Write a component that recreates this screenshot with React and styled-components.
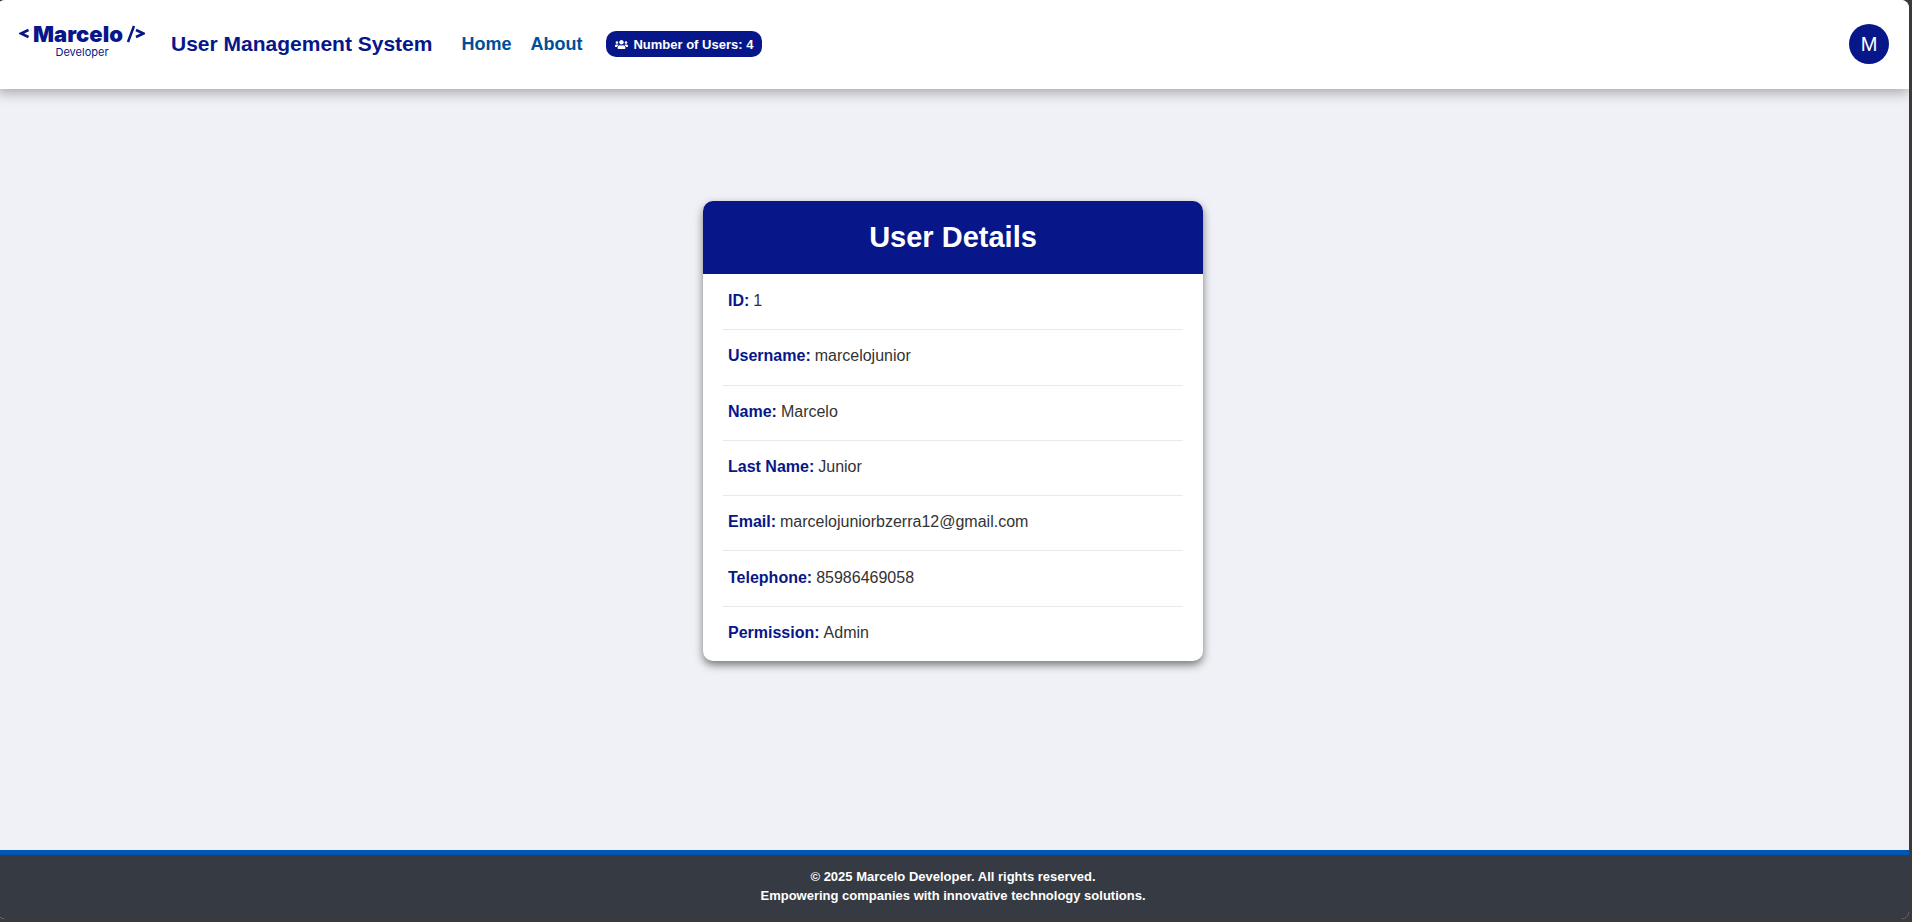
import React from "react";
import styled, { createGlobalStyle } from "styled-components";
import { FaUsers } from "react-icons/fa";

const navy = "#071789";

const GlobalStyle = createGlobalStyle`
  *, *::before, *::after { box-sizing: border-box; }
  body {
    margin: 0;
    background: #3b3a3a;
    color: #333;
    font-family: "Liberation Sans", Arial, sans-serif;
    font-size: 16px;
    overflow-x: hidden;
  }
`;

const Page = styled.div`
  display: flex;
  flex-direction: column;
  min-height: calc(100vh - 3px);
  margin: 0 3px 3px -3px;
  border-radius: 8px;
  overflow: hidden;
  background: #f0f1f6;
`;

const Header = styled.header`
  display: flex;
  align-items: center;
  justify-content: space-between;
  min-height: 89px;
  padding: 0 20px 1px;
  background: #fff;
  box-shadow: 0 4px 12px rgba(0, 0, 0, 0.3);
`;

const HeaderGroup = styled.div`
  display: flex;
  align-items: center;
`;

const Logo = styled.a`
  display: flex;
  flex-direction: column;
  align-items: center;
  width: 130px;
  padding-bottom: 8px;
  color: ${navy};
  text-decoration: none;
  font-family: Inter, sans-serif;
`;

const LogoName = styled.span`
  display: flex;
  align-items: center;
  gap: 4px;
  font-size: 22px;
  line-height: 24px;
  font-weight: 900;
`;

const LogoMark = styled.svg`
  display: block;
  fill: none;
  stroke: currentColor;
  stroke-width: 2.5;
`;

const LogoRole = styled.span`
  font-size: 11px;
  line-height: 12px;
`;

const Title = styled.h1`
  margin: 0 0 0 24px;
  color: ${navy};
  font-size: 21px;
  line-height: 24px;
`;

const Nav = styled.nav`
  display: flex;
  gap: 19px;
  margin: 0 24px 0 29px;
`;

const NavLink = styled.a`
  color: #004e98;
  font-size: 18px;
  font-weight: bold;
  line-height: 24px;
  text-decoration: none;
`;

const Badge = styled.span`
  display: flex;
  align-items: center;
  gap: 5px;
  height: 26px;
  padding: 0 9px;
  border-radius: 10px;
  background: ${navy};
  color: #fff;
  font-size: 13px;
  font-weight: bold;
`;

const Avatar = styled.button`
  width: 40px;
  height: 40px;
  padding: 0;
  border: 0;
  border-radius: 50%;
  background: ${navy};
  color: #fff;
  font-family: inherit;
  font-size: 20px;
  cursor: pointer;
`;

const Main = styled.main`
  flex: 1;
  display: flex;
  justify-content: center;
  align-items: flex-start;
  padding: 112px 20px;
`;

const Card = styled.section`
  width: 100%;
  max-width: 500px;
  border-radius: 10px;
  overflow: hidden;
  background: #fff;
  box-shadow: 0 4px 8px rgba(0, 0, 0, 0.5);
`;

const CardTitle = styled.h2`
  margin: 0;
  padding: 18px 20px;
  background: ${navy};
  color: #fff;
  font-size: 29px;
  line-height: 37px;
  text-align: center;
`;

const Details = styled.dl`
  display: grid;
  grid-auto-rows: 1fr;
  min-height: 387px;
  margin: 0;
  padding: 0 20px;
`;

const Detail = styled.div`
  display: flex;
  align-items: center;
  gap: 4px;
  padding: 0 5px 2px;

  & + & {
    border-top: 1px solid #e8e9ea;
  }
`;

const Label = styled.dt`
  color: ${navy};
  font-weight: bold;
`;

const Value = styled.dd`
  margin: 0;
`;

const Footer = styled.footer`
  padding: 12px 20px 14px;
  border-top: 5px solid #0056b3;
  background: #363a42;
  color: #fff;
  font-size: 13px;
  font-weight: bold;
  line-height: 19px;
  text-align: center;
`;

const FooterLine = styled.p`
  margin: 0;
`;

const user = [
  ["ID", "1"],
  ["Username", "marcelojunior"],
  ["Name", "Marcelo"],
  ["Last Name", "Junior"],
  ["Email", "marcelojuniorbzerra12@gmail.com"],
  ["Telephone", "85986469058"],
  ["Permission", "Admin"],
];

export default function App() {
  return (
    <>
      <GlobalStyle />
      <Page>
        <Header>
          <HeaderGroup>
            <Logo href="#home">
              <LogoName>
                <LogoMark width="10" height="16" viewBox="0 0 10 16" aria-hidden="true">
                  <path d="M9.500 4L2 7.500L9.500 11" />
                </LogoMark>
                Marcelo
                <LogoMark width="18" height="20" viewBox="0 0 18 20" aria-hidden="true">
                  <path d="M1 18L7 2M9 6L16.500 9.500L9 13" />
                </LogoMark>
              </LogoName>
              <LogoRole>Developer</LogoRole>
            </Logo>
            <Title>User Management System</Title>
            <Nav>
              <NavLink href="#home">Home</NavLink>
              <NavLink href="#about">About</NavLink>
            </Nav>
            <Badge>
              <FaUsers size={13} aria-hidden="true" />
              Number of Users: 4
            </Badge>
          </HeaderGroup>
          <Avatar type="button">M</Avatar>
        </Header>
        <Main>
          <Card>
            <CardTitle>User Details</CardTitle>
            <Details>
              {user.map(([label, value]) => (
                <Detail key={label}>
                  <Label>{label}:</Label>
                  <Value>{value}</Value>
                </Detail>
              ))}
            </Details>
          </Card>
        </Main>
        <Footer>
          <FooterLine>© 2025 Marcelo Developer. All rights reserved.</FooterLine>
          <FooterLine>Empowering companies with innovative technology solutions.</FooterLine>
        </Footer>
      </Page>
    </>
  );
}
